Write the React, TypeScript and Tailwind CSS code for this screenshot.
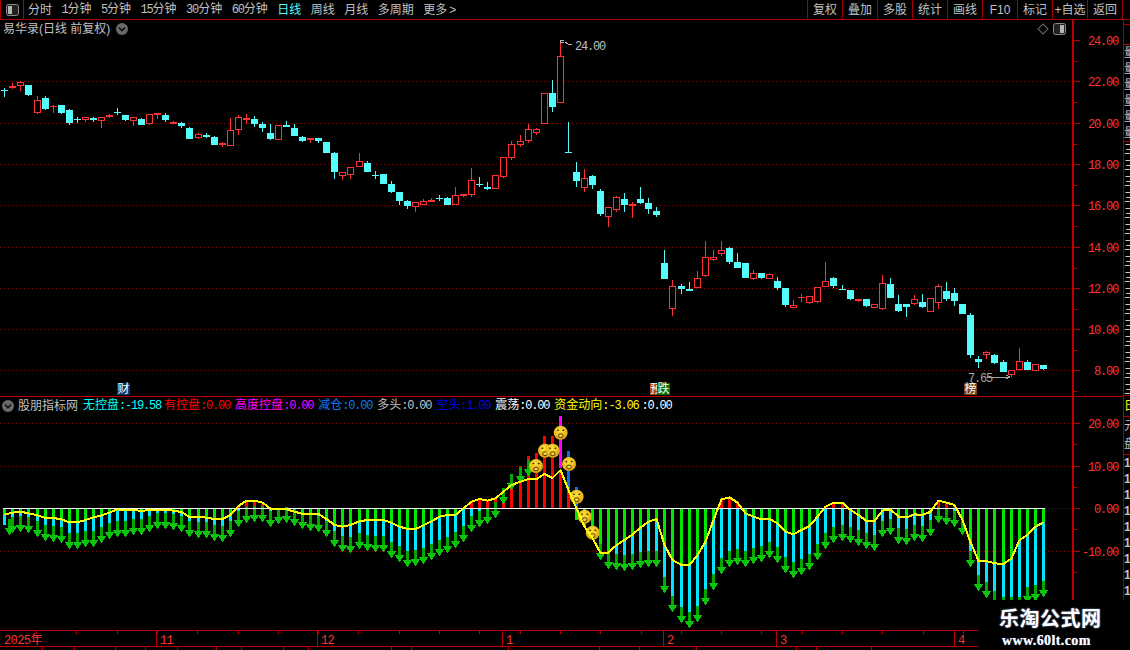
import type { ReactNode } from "react";

// y values below are measured at 3x, true pixel = y / 3
type Candle = [string, number, number, number, number];

const candles: Candle[] = [
  ["c", 265, 270, 271, 290], ["r", 250, 258, 263, 267], ["r", 244, 247, 257, 272], ["c", 255, 255, 285, 287],
  ["r", 288, 301, 338, 341], ["c", 288, 294, 326, 330], ["r", 315, 318, 320, 338], ["c", 315, 315, 338, 341],
  ["c", 327, 330, 368, 374], ["c", 350, 357, 358, 368], ["r", 351, 352, 360, 366], ["c", 350, 354, 360, 365],
  ["r", 351, 352, 362, 384], ["r", 342, 344, 350, 353], ["c", 325, 336, 337, 345], ["c", 345, 345, 359, 362],
  ["r", 351, 352, 362, 377], ["c", 355, 358, 374, 375], ["r", 342, 343, 373, 376], ["r", 339, 340, 344, 357],
  ["c", 340, 345, 360, 365], ["r", 364, 367, 371, 372], ["c", 366, 369, 377, 384], ["c", 380, 385, 416, 418],
  ["r", 400, 403, 415, 417], ["c", 400, 405, 411, 413], ["c", 408, 411, 435, 436], ["r", 427, 428, 434, 440],
  ["r", 355, 391, 437, 437], ["r", 345, 352, 391, 404], ["r", 342, 354, 361, 372], ["c", 349, 357, 372, 381],
  ["c", 366, 372, 384, 396], ["c", 372, 399, 416, 420], ["r", 375, 375, 419, 419], ["c", 363, 375, 380, 381],
  ["c", 372, 384, 407, 408], ["c", 408, 411, 423, 425], ["r", 415, 415, 421, 428], ["c", 414, 414, 423, 429],
  ["c", 425, 427, 458, 460], ["c", 455, 459, 516, 536], ["r", 517, 517, 527, 540], ["r", 502, 502, 524, 537],
  ["r", 459, 484, 500, 500], ["c", 484, 489, 515, 516], ["c", 513, 524, 525, 536], ["c", 522, 522, 551, 551],
  ["c", 543, 552, 576, 579], ["c", 576, 576, 602, 615], ["c", 600, 603, 617, 627], ["r", 605, 607, 622, 635],
  ["r", 598, 604, 616, 616], ["r", 595, 601, 605, 605], ["c", 586, 595, 596, 602], ["c", 592, 594, 615, 615],
  ["r", 562, 586, 614, 614], ["r", 582, 582, 587, 590], ["r", 505, 541, 584, 590], ["c", 531, 553, 554, 560],
  ["c", 546, 562, 567, 570], ["r", 526, 526, 566, 567], ["r", 472, 472, 530, 533], ["r", 424, 433, 473, 479],
  ["r", 405, 424, 434, 440], ["r", 373, 388, 422, 428], ["r", 384, 388, 398, 404], ["r", 280, 280, 371, 371],
  ["c", 240, 280, 321, 335], ["r", 130, 169, 308, 308], ["c", 367, 457, 458, 458], ["c", 486, 517, 543, 560],
  ["r", 508, 535, 563, 575], ["c", 525, 529, 555, 566], ["c", 568, 574, 642, 648], ["r", 622, 622, 650, 680],
  ["r", 588, 592, 629, 635], ["c", 580, 598, 614, 635], ["r", 606, 612, 617, 654], ["c", 562, 597, 609, 612],
  ["c", 594, 609, 627, 642], ["c", 621, 634, 645, 650], ["c", 750, 789, 837, 837], ["r", 840, 859, 926, 948],
  ["c", 852, 858, 866, 882], ["c", 846, 868, 872, 872], ["r", 814, 835, 863, 865], ["r", 723, 772, 827, 830],
  ["r", 750, 772, 779, 782], ["r", 723, 751, 761, 768], ["c", 740, 744, 786, 792], ["c", 759, 786, 803, 803],
  ["c", 789, 789, 834, 834], ["r", 810, 820, 837, 840], ["c", 819, 819, 834, 837], ["r", 820, 823, 836, 836],
  ["c", 831, 843, 864, 870], ["c", 864, 864, 915, 921], ["r", 900, 916, 923, 923], ["r", 882, 891, 895, 906],
  ["r", 888, 888, 909, 912], ["r", 862, 862, 906, 909], ["r", 786, 844, 861, 861], ["c", 831, 834, 858, 864],
  ["c", 855, 867, 869, 869], ["c", 870, 870, 897, 900], ["r", 897, 897, 902, 906], ["c", 897, 897, 918, 921],
  ["r", 912, 912, 923, 923], ["r", 825, 850, 927, 930], ["c", 834, 852, 894, 894], ["c", 885, 912, 933, 936],
  ["c", 912, 912, 921, 951], ["r", 885, 897, 911, 915], ["c", 882, 906, 921, 924], ["r", 894, 894, 935, 935],
  ["r", 852, 859, 908, 927], ["c", 846, 873, 897, 903], ["c", 864, 879, 903, 918], ["c", 912, 912, 942, 942],
  ["c", 939, 945, 1065, 1074], ["c", 1068, 1077, 1086, 1104], ["r", 1053, 1056, 1064, 1077], ["c", 1062, 1065, 1089, 1092],
  ["c", 1080, 1086, 1116, 1116], ["r", 1110, 1110, 1125, 1131], ["r", 1044, 1083, 1110, 1110], ["c", 1080, 1086, 1110, 1110],
  ["r", 1092, 1092, 1113, 1113], ["c", 1095, 1095, 1107, 1110],
];

// yellow line and arrow tips, measured at 3x from y = 380
const yellow = [
  404, 398, 395, 400, 406, 414, 414, 418, 427, 427, 420, 412, 406, 398, 388, 391, 391, 392, 391, 390, 390, 392, 396, 411, 411, 413,
  417, 417, 405, 378, 362, 362, 368, 386, 388, 388, 395, 402, 402, 402, 417, 435, 440, 435, 424, 420, 420, 420, 428, 440, 447, 447,
  436, 424, 410, 405, 405, 385, 365, 357, 362, 355, 335, 315, 305, 297, 297, 282, 294, 270, 330, 385, 440, 474, 519, 518, 495, 480,
  463, 443, 425, 417, 495, 540, 555, 555, 525, 485, 420, 358, 352, 368, 400, 410, 418, 417, 430, 455, 463, 450, 438, 410, 380, 368,
  368, 390, 405, 423, 423, 392, 388, 410, 412, 403, 405, 395, 362, 368, 375, 420, 487, 542, 543, 550, 552, 535, 480, 465, 440, 427,
];

const tips = [
  465, 460, 455, 460, 470, 483, 486, 490, 506, 506, 500, 500, 490, 478, 470, 470, 465, 466, 455, 446, 446, 449, 455, 470, 473, 475,
  484, 485, 470, 442, 428, 425, 425, 440, 432, 430, 437, 448, 453, 455, 470, 500, 515, 518, 508, 512, 515, 515, 535, 546, 560, 557,
  552, 540, 527, 520, 503, 485, 455, 440, 433, 413, 372, 330, 308, 287, 0, 0, 0, 0, 0, 0, 0, 0, 540, 567, 570, 573, 570, 565, 560, 560,
  640, 695, 728, 743, 725, 675, 630, 582, 560, 555, 560, 552, 547, 535, 548, 578, 593, 585, 570, 540, 506, 488, 482, 490, 497, 508,
  513, 470, 466, 491, 495, 482, 485, 468, 430, 434, 440, 465, 560, 632, 653, 680, 700, 700, 700, 668, 663, 650,
];

const redTops: Record<number, number> = { 29: 375, 58: 362, 59: 355, 61: 353, 62: 327, 63: 285, 64: 258, 65: 228, 66: 219, 67: 168, 68: 168, 69: 270 };

const faces = [
  [560.7, 432.7], [545, 450.7], [552.7, 450.7], [536, 466], [569, 464], [576.7, 496.7], [584.7, 516.7], [592.7, 532.7],
];

const priceLabels = [
  ["24.00", 40], ["22.00", 81], ["20.00", 123], ["18.00", 164], ["16.00", 205], ["14.00", 247], ["12.00", 288], ["10.00", 329], ["8.00", 370],
] as const;

const indicatorLabels = [
  ["20.00", 423], ["10.00", 466], ["0.00", 508], ["-10.00", 551],
] as const;

const months = [
  ["2025年", 1], ["11", 157], ["12", 318], ["1", 503], ["2", 664], ["3", 777], ["4", 955],
] as const;

// stubs of the tab bar that is cut off at the bottom of the window
const bottomTicks = [42, 74, 115, 145, 177, 216, 241, 283, 308, 391, 411, 508, 599, 639, 696, 796, 816, 871];

const cx = (i: number) => Math.round(4.3 + 8.05 * i);
const ly = (z: number) => Math.round(380 + z / 3);

const Num = ({ children }: { children: ReactNode }) => (
  <span className="font-['Liberation_Mono'] tracking-[-1.2px]">{children}</span>
);

const Chevron = () => (
  <svg width="12" height="12" viewBox="0 0 12 12" className="block shrink-0">
    <circle cx="6" cy="6" r="6" fill="#6a6a6a" />
    <path d="M3 4.6 L6 7.6 L9 4.6" stroke="#111" strokeWidth="1.6" fill="none" />
  </svg>
);

const PanelIcon = ({ side }: { side: "left" | "right" }) => (
  <svg width="13" height="12" viewBox="0 0 13 12" className="block shrink-0">
    <rect x="0.5" y="0.5" width="12" height="11" rx="2" fill="#222" stroke="#8a8a8a" />
    <rect x={side === "left" ? 2 : 7} y="2" width="4" height="8" fill="#b5b5b5" />
  </svg>
);

const Tab = ({ label }: { label: string }) => (
  <div className="w-[35px] h-full border-l border-[#a00000] flex items-center justify-center">{label}</div>
);

const Legend = ({ name, value, color, className }: { name?: string; value: string; color: string; className?: string }) => (
  <span className={"whitespace-nowrap " + (className ?? "")} style={{ color }}>
    {name}
    <Num>:{value}</Num>
  </span>
);

const StripRows = ({ count, text, className }: { count: number; text: string; className?: string }) => (
  <div className={"overflow-hidden whitespace-nowrap text-[#c4c4c4] " + (className ?? "")}>
    {Array.from({ length: count }).map((_, i) => (
      <div key={i} className="h-4 leading-4">
        {text}
      </div>
    ))}
  </div>
);

const Candles = () => (
  <svg width="1072" height="376" viewBox="0 20 1072 376" className="block" shapeRendering="crispEdges">
    {priceLabels.slice(1).map(([label, y]) => (
      <line key={label} x1="0" x2="1072" y1={y + 0.5} y2={y + 0.5} stroke="#8a0000" strokeDasharray="1 3" />
    ))}
    {candles.map(([type, wt, bt, bb, wb], i) => {
      const x = cx(i);
      const color = type === "r" ? "#ff3232" : "#54fcfc";
      const t = Math.round(bt / 3);
      const h = Math.max(Math.round(bb / 3) - t, 1);
      return (
        <g key={i}>
          <rect x={x} y={Math.round(wt / 3)} width="1" height={Math.max(Math.round(wb / 3) - Math.round(wt / 3), 1)} fill={color} />
          {type === "r" && h > 2 ? (
            <rect x={x - 2.5} y={t + 0.5} width="6" height={h - 1} fill="#000" stroke={color} />
          ) : (
            <rect x={x - 3} y={t} width="7" height={h} fill={color} />
          )}
        </g>
      );
    })}
    <path d="M560 43 V40 H564 M560 42 H564 M565 42 L568 44 L572 44" stroke="#b8b8b8" fill="none" />
    <text x="575" y="50" fontSize="12" fill="#c0c0c0" className="font-['Liberation_Mono'] tracking-[-1.2px]">
      24.00
    </text>
    <text x="968" y="382" fontSize="12" fill="#a8a8a8" className="font-['Liberation_Mono'] tracking-[-1.2px]">
      7.65
    </text>
    <path d="M987 377 H1010 M1006 375 L1010 377 L1006 379" stroke="#a8a8a8" fill="none" />
  </svg>
);

const Indicator = () => (
  <svg width="1072" height="233" viewBox="0 397 1072 233" className="block" shapeRendering="crispEdges">
    <defs>
      <radialGradient id="faceFill" cx="45%" cy="35%" r="70%">
        <stop offset="0%" stopColor="#ffe23a" />
        <stop offset="100%" stopColor="#d8a00c" />
      </radialGradient>
    </defs>
    {[423, 466, 551].map((y) => (
      <line key={y} x1="0" x2="1072" y1={y + 0.5} y2={y + 0.5} stroke="#8a0000" strokeDasharray="1 3" />
    ))}
    <line x1="1045" x2="1072" y1="508.5" y2="508.5" stroke="#8a0000" strokeDasharray="1 3" />
    {yellow.map((z, i) => {
      const x = cx(i) - 1;
      const line = ly(z);
      const end = tips[i] ? ly(tips[i]) - 10 : 0;
      const top = Math.max(line, 508);
      return (
        <g key={i}>
          {z < 385 ? (
            <rect x={x} y={ly(redTops[i] ?? z)} width="3" height={508 - ly(redTops[i] ?? z)} fill="#ff0000" />
          ) : (
            <rect x={x} y="508" width="3" height={line - 508} fill="#00e800" />
          )}
          {end > top && <rect x={x} y={top} width="3" height={end - top} fill="#00e6ff" />}
        </g>
      );
    })}
    {/* the bars near the high carry a second colour on top */}
    <rect x={cx(69) - 1} y="416" width="3" height="52" fill="#ff00ff" />
    <rect x={cx(70) - 1} y="451" width="3" height="57" fill="#ff0000" />
    <rect x={cx(70) - 1} y="451" width="3" height="42" fill="#0a6cf0" />
    <rect x={cx(71) - 1} y="487" width="3" height="21" fill="#0a6cf0" />
    <rect x={cx(71) - 1} y="508" width="3" height="12" fill="#00e800" />
    {tips.map((z, i) => {
      if (!z) return null;
      const x = i === 0 ? 9 : cx(i);
      const tip = ly(z);
      return (
        <g key={i}>
          <rect x={x - 1} y={tip - 16} width="3" height="9" fill="#00a800" />
          <polygon points={`${x - 4.5},${tip - 7} ${x + 5.5},${tip - 7} ${x + 0.5},${tip}`} fill="#0cc40c" />
        </g>
      );
    })}
    <line x1="3" x2="1045" y1="508.5" y2="508.5" stroke="#ffffff" />
    <g shapeRendering="auto">
      {faces.map(([x, y], i) => (
        <g key={i}>
          <circle cx={x} cy={y} r="7" fill="url(#faceFill)" />
          <ellipse cx={x - 2.6} cy={y - 2.4} rx="1" ry="0.8" fill="#3a2400" />
          <ellipse cx={x + 2.6} cy={y - 2.4} rx="1" ry="0.8" fill="#3a2400" />
          <ellipse cx={x} cy={y + 3} rx="2.3" ry="1.9" fill="#f8d848" stroke="#5a3400" strokeWidth="1" />
        </g>
      ))}
    </g>
    <polyline
      points={yellow.map((z, i) => `${cx(i) + 0.5},${380 + z / 3}`).join(" ")}
      fill="none"
      stroke="#ffff00"
      strokeWidth="2"
    />
  </svg>
);

const Axis = ({ labels, height, top, half }: { labels: readonly (readonly [string, number])[]; height: number; top: number; half: number }) => (
  <svg width="50" height={height} viewBox={`0 ${top} 50 ${height}`} className="block" shapeRendering="crispEdges">
    {labels.map(([label, y]) => (
      <g key={label}>
        <rect x="0" y={y} width="6" height="1" fill="#c00000" />
        <rect x="0" y={y + half} width="3" height="1" fill="#c00000" />
        <text
          x="44"
          y={y + 5}
          fontSize="12"
          textAnchor="end"
          fill="#ff3232"
          className="font-['Liberation_Mono'] tracking-[-1.2px]"
        >
          {label}
        </text>
      </g>
    ))}
  </svg>
);

const TimeAxis = () => (
  <svg width="1123" height="16" viewBox="0 630 1123 16" className="block" shapeRendering="crispEdges">
    {Array.from({ length: 28 }).map((_, i) => (
      <rect key={i} x={36 + i * 40.3} y="630" width="1" height="3" fill="#c00000" />
    ))}
    {months.map(([label, x]) => (
      <g key={label}>
        {x > 1 && <rect x={x - 1} y="630" width="1" height="16" fill="#c00000" />}
        <text x={x + 3} y="643" fontSize="12" fill="#ff3232" className="font-['Liberation_Mono','Noto_Sans_CJK_SC'] tracking-[-0.6px]">
          {label}
        </text>
      </g>
    ))}
  </svg>
);

export default function App() {
  return (
    <div className="relative w-[1130px] h-[650px] overflow-hidden bg-black text-[12px] leading-none text-[#c0c0c0] flex flex-col font-['Liberation_Sans','Noto_Sans_CJK_SC',sans-serif]">
      {/* top menu */}
      <header className="h-5 shrink-0 border-b border-[#b00000] flex items-center">
        <div className="w-6 h-full border-x border-[#b00000] flex items-center justify-center">
          <PanelIcon side="left" />
        </div>
        <nav className="flex items-center gap-[9.5px] ml-[4px]">
          <span>分时</span>
          <span><Num>1</Num>分钟</span>
          <span><Num>5</Num>分钟</span>
          <span><Num>15</Num>分钟</span>
          <span><Num>30</Num>分钟</span>
          <span><Num>60</Num>分钟</span>
          <span className="text-[#54fcfc]">日线</span>
          <span>周线</span>
          <span>月线</span>
          <span>多周期</span>
          <span>更多<span className="ml-[2px]">&gt;</span></span>
        </nav>
        <div className="ml-auto mr-[7px] h-full flex border-r border-[#a00000]">
          {["复权", "叠加", "多股", "统计", "画线", "F10", "标记", "+自选", "返回"].map((t) => (
            <Tab key={t} label={t} />
          ))}
        </div>
      </header>

      <div className="flex h-[630px]">
        <div className="w-[1123px] flex flex-col shrink-0">
          {/* candles */}
          <section className="h-[377px] flex border-b border-[#c00000]">
            <div className="relative w-[1072px]">
              <Candles />
              <div className="absolute left-[3px] top-[3px] flex items-center gap-[6px]">
                <span>易华录(日线 前复权)</span>
                <Chevron />
              </div>
              <div className="absolute left-[1039px] top-[3px] flex items-center gap-[6px]">
                <span className="block w-2 h-2 rotate-45 border border-[#6a6a6a]" />
                <PanelIcon side="right" />
              </div>
              <span className="absolute left-[117px] top-[363px] w-[13px] h-3 bg-[#003a70] text-white flex items-center justify-center">财</span>
              <div className="absolute left-[650px] top-[363px] h-3 flex text-white">
                <span className="w-[7px] bg-[#a84a10] overflow-hidden">预</span>
                <span className="w-[13px] bg-[#007000] flex items-center justify-center">跌</span>
              </div>
              <span className="absolute left-[964px] top-[363px] w-[13px] h-3 bg-[#7a4010] text-white flex items-center justify-center">榜</span>
            </div>
            <div className="w-[51px] border-l-2 border-[#c00000]">
              <Axis labels={priceLabels} height={376} top={20} half={21} />
            </div>
          </section>

          {/* indicator */}
          <section className="h-[233px] flex">
            <div className="relative w-[1072px]">
              <Indicator />
              <div className="absolute left-[2px] top-[2px] flex items-center gap-[5px]">
                <div className="mr-[-1px]">
                  <Chevron />
                </div>
                <span>股朋指标网</span>
                <Legend name="无控盘" value="-19.58" color="#00ffff" className="mr-[-2px]" />
                <Legend name="有控盘" value="0.00" color="#ff0000" />
                <Legend name="高度控盘" value="0.00" color="#ff00ff" />
                <Legend name="减仓" value="0.00" color="#0a7aff" />
                <Legend name="多头" value="0.00" color="#c0c0c0" />
                <Legend name="空头" value="1.00" color="#0000ff" />
                <Legend name="震荡" value="0.00" color="#ffffff" />
                <Legend name="资金动向" value="-3.06" color="#ffff00" className="mr-[-2px]" />
                <Legend value="0.00" color="#ffffff" />
              </div>
            </div>
            <div className="w-[51px] border-l-2 border-[#c00000]">
              <Axis labels={indicatorLabels} height={233} top={397} half={21} />
            </div>
          </section>

          {/* dates */}
          <section className="h-[17px] border-y border-[#c00000]">
            <TimeAxis />
          </section>
          <svg width="1123" height="3" className="block shrink-0" shapeRendering="crispEdges">
            {bottomTicks.map((x) => (
              <rect key={x} x={x} y="0" width="1" height="3" fill="#c00000" />
            ))}
          </svg>
        </div>

        {/* side list, only its left edge is visible */}
        <aside className="w-[7px] border-l border-[#a00000] flex flex-col">
          <div className="h-[5px] border-b border-[#a00000]" />
          <div className="h-[20px] border-b border-[#a00000]" />
          <StripRows count={6} text="量价" className="h-[97px] border-b border-[#a00000]" />
          <StripRows count={16} text="三五" className="h-[254px] border-b border-[#a00000]" />
          <div className="h-[21px] border-b border-[#a00000] text-[#ffff00] overflow-hidden pt-1">日</div>
          <div className="h-[38px] border-b border-[#a00000] overflow-hidden leading-[18px]">
            <div>元</div>
            <div>盘</div>
          </div>
          <StripRows count={12} text="1" className="font-bold" />
        </aside>
      </div>

      {/* watermark covering the corner */}
      <div className="absolute left-[978px] top-[600px] w-[152px] h-[50px] bg-black flex flex-col items-start">
        <span className="ml-[21px] mt-[9px] text-[20px] leading-[20px] tracking-[0.5px] font-bold text-white [text-shadow:0_0_2px_#7f9fd0]">
          乐淘公式网
        </span>
        <span className="ml-[24px] mt-[5px] font-['Liberation_Serif'] text-[14px] leading-[14px] tracking-[0.4px] font-bold text-white [text-shadow:0_0_1px_#7f9fd0]">
          www.60lt.com
        </span>
      </div>
    </div>
  );
}
